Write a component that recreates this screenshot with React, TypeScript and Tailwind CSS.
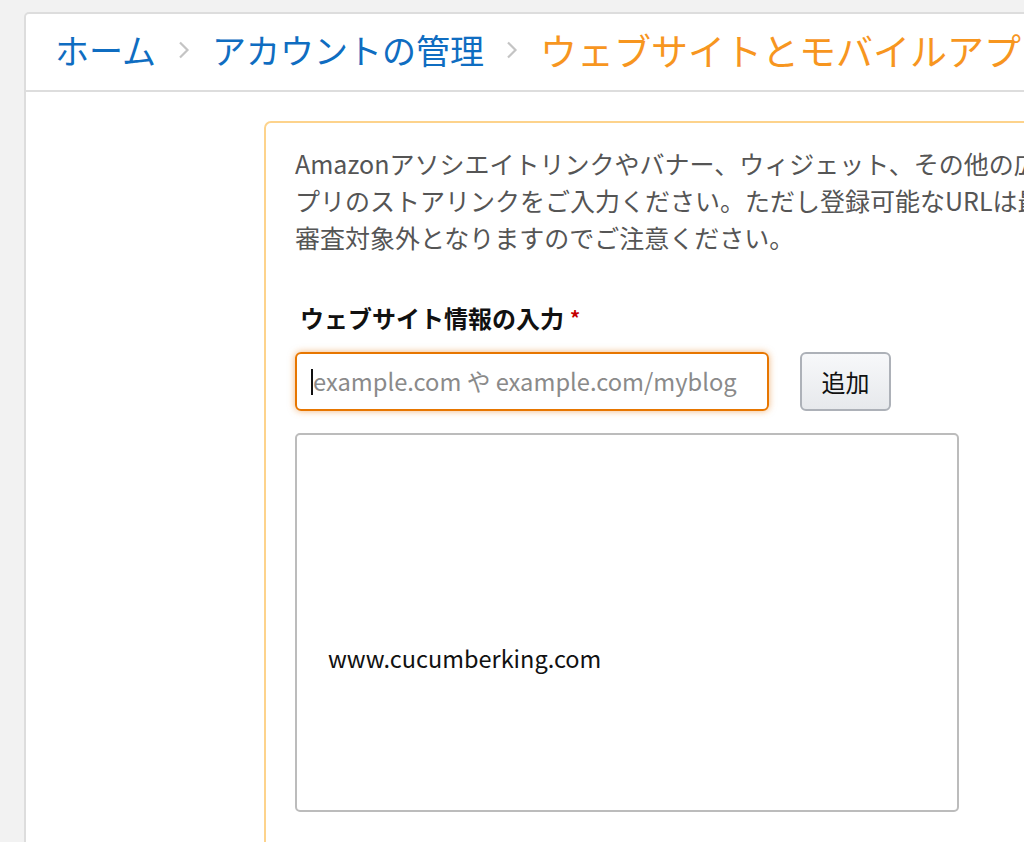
import { FC } from 'react';

const crumbs = [
  { id: 1, label: 'ホーム', current: false },
  { id: 2, label: 'アカウントの管理', current: false },
  { id: 3, label: 'ウェブサイトとモバイルアプリの情報', current: true },
];

const introLines = [
  'Amazonアソシエイトリンクやバナー、ウィジェット、その他の広告を掲載するウェブサイトやア',
  'プリのストアリンクをご入力ください。ただし登録可能なURLは最大50件までとなります。',
  '審査対象外となりますのでご注意ください。',
];

const sites = ['www.cucumberking.com'];

const Chevron: FC = () => (
  <svg width="12" height="20" viewBox="0 0 12 20" className="flex-none">
    <path d="M2 2.5 L9.5 10 L2 17.5" fill="none" stroke="#c4c4c4" strokeWidth="2.2" />
  </svg>
);

export default function App() {
  return (
    <div className="h-[842px] w-[1024px] overflow-hidden bg-[#f2f2f2] pt-[12px] pl-[24px] font-['Noto_Sans_CJK_JP','Noto_Sans',sans-serif]">
      <div className="min-h-[900px] w-[1100px] rounded-tl-[5px] border-2 border-[#dddddd] bg-white">
        {/* breadcrumb, last crumb is the current page and set a bit larger */}
        <div className="flex h-[78px] items-center gap-[22px] border-b-2 border-[#dddddd] pb-[4px] pl-[29px] leading-none whitespace-nowrap">
          {crumbs.map((item, idx) => (
            <div key={item.id} className="flex items-center gap-[22px]">
              {idx > 0 && <Chevron />}
              <span className={item.current ? 'text-[37px] text-[#f7961f]' : 'text-[34px] text-[#0f6dc1]'}>
                {item.label}
              </span>
            </div>
          ))}
        </div>

        <div className="pt-[29px] pl-[238px]">
          <div className="min-h-[760px] rounded-tl-[7px] border-2 border-[#fdd38c] pt-[22px] pl-[29px]">
            <p className="text-[25px] leading-[37px] text-[#555555]">
              {introLines.map((line) => (
                <span key={line} className="block whitespace-nowrap">
                  {line}
                </span>
              ))}
            </p>

            <div className="mt-[47px] flex items-center pl-[5px] text-[24px] leading-[30px] font-bold text-[#111111]">
              ウェブサイト情報の入力
              <span className="ml-[6px] text-[20px] text-[#c40000]">*</span>
            </div>

            <div className="mt-[19px] flex gap-[31px]">
              <div className="flex h-[59px] w-[474px] items-center rounded-[6px] border-2 border-[#e77600] pl-[14px] shadow-[0_0_7px_rgba(228,121,17,0.55)]">
                <span className="h-[26px] w-[2px] flex-none bg-[#111111]" />
                <span className="text-[23.7px] whitespace-nowrap text-[#8a8a8a]">
                  example.com や example.com/myblog
                </span>
              </div>
              <button className="h-[59px] w-[91px] rounded-[6px] border-2 border-[#adb1b8] bg-gradient-to-b from-[#f7f8fa] to-[#e7e9ec] text-[24px] text-[#111111]">
                追加
              </button>
            </div>

            <div className="mt-[22px] flex h-[379px] w-[664px] flex-col justify-center rounded-[5px] border-2 border-[#bcbcbc] pt-[70px] pl-[31px]">
              {sites.map((site) => (
                <div key={site} className="text-[23.5px] leading-[30px] text-[#111111]">
                  {site}
                </div>
              ))}
            </div>
          </div>
        </div>
      </div>
    </div>
  );
}
